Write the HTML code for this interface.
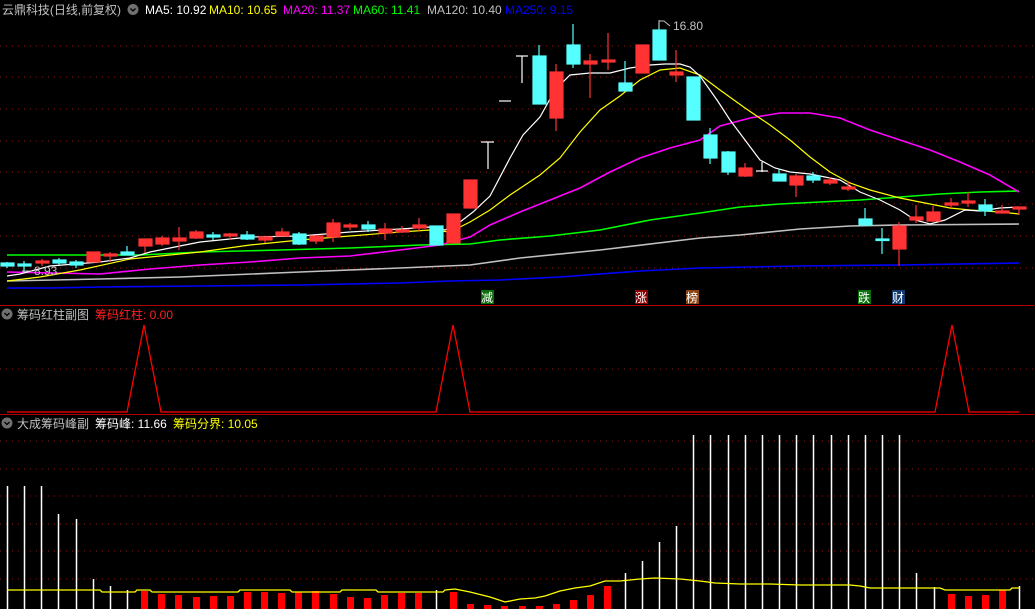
<!DOCTYPE html>
<html><head><meta charset="utf-8"><style>
html,body{margin:0;padding:0;background:#000;width:1035px;height:609px;overflow:hidden}
svg{display:block}
text{font-family:"Liberation Sans","Noto Sans CJK SC",sans-serif;font-size:12px}
</style></head><body>
<svg width="1035" height="609" viewBox="0 0 1035 609" xmlns="http://www.w3.org/2000/svg">
<rect width="1035" height="609" fill="#000"/>
<!-- grid main -->
<g stroke="#8b1a1a" stroke-dasharray="1,5" stroke-width="1">
<line x1="0" y1="46" x2="1035" y2="46"/><line x1="0" y1="77" x2="1035" y2="77"/><line x1="0" y1="109" x2="1035" y2="109"/><line x1="0" y1="141" x2="1035" y2="141"/><line x1="0" y1="172" x2="1035" y2="172"/><line x1="0" y1="204" x2="1035" y2="204"/><line x1="0" y1="236" x2="1035" y2="236"/><line x1="0" y1="268" x2="1035" y2="268"/>
<line x1="0" y1="369" x2="1035" y2="369"/>
<line x1="0" y1="441" x2="1035" y2="441"/><line x1="0" y1="469" x2="1035" y2="469"/><line x1="0" y1="496" x2="1035" y2="496"/><line x1="0" y1="524" x2="1035" y2="524"/><line x1="0" y1="551" x2="1035" y2="551"/><line x1="0" y1="579" x2="1035" y2="579"/>
</g>
<line x1="0" y1="305.5" x2="1035" y2="305.5" stroke="#b00000"/>
<line x1="0" y1="414.5" x2="1035" y2="414.5" stroke="#b00000"/>
<!-- MAs -->
<g fill="none" stroke-width="1.2">
<polyline stroke="#0000ff" stroke-width="1.6" points="7,288 50,288 100,287 200,286 300,285 400,283 450,281 500,280 560,277 640,271 700,268 800,266 900,265 1019,263"/>
<polyline stroke="#c0c0c0" stroke-width="1.6" points="7,281 100,279 180,277 300,272 400,268 470,265 520,258 600,250 700,238 740,235 800,229 850,226 900,225 1019,224"/>
<polyline stroke="#00ff00" stroke-width="1.6" points="7,255 140,255 200,252 280,250 350,248 420,245 470,244 500,240 550,236 600,230 650,220 700,213 740,207 780,204 820,202 860,200 900,197 940,194 980,192 1019,191"/>
<polyline stroke="#ff00ff" stroke-width="1.6" points="7,272 100,274 150,269 200,265 250,262 300,258 350,256 400,250 440,245 470,237 490,225 520,212 550,200 580,188 610,172 640,158 670,148 700,140 720,126 750,118 780,113 810,113 840,118 870,130 900,140 930,150 960,162 990,175 1019,192"/>
<polyline stroke="#ffff00" points="7,281 40,277 80,270 130,259 200,252 250,245 300,240 350,236 400,232 430,230 450,232 470,222 490,210 510,195 525,185 540,175 560,158 580,132 600,110 620,96 640,80 660,70 680,68 700,75 720,90 745,108 770,125 790,140 810,157 830,172 850,183 870,190 900,198 930,204 950,208 970,210 1000,212 1019,214"/>
<polyline stroke="#ffffff" points="7,276 20,274 50,266 100,262 130,258 150,252 200,242 250,237 300,236 350,232 400,229 430,227 445,230 460,222 473,212 490,196 510,158 523,135 540,117 555,90 570,75 590,73 610,73 630,68 650,65 665,64 680,64 690,67 700,76 717,100 730,120 745,140 760,160 775,168 790,172 810,174 840,180 860,192 880,200 900,210 915,220 930,224 945,220 965,210 980,211 1000,208 1019,207"/>
</g>
<!-- candles -->
<g stroke-width="1.2">
<g stroke="#55ffff" fill="#55ffff">
<line x1="7" y1="262" x2="7" y2="268"/><rect x="1" y="263" width="13" height="3"/>
<line x1="24" y1="261" x2="24" y2="272"/><rect x="18" y="264" width="13" height="2"/>
<line x1="59" y1="258" x2="59" y2="265"/><rect x="53" y="260" width="13" height="3"/>
<line x1="76" y1="260" x2="76" y2="268"/><rect x="70" y="262" width="13" height="3"/>
<line x1="127" y1="246" x2="127" y2="255"/><rect x="121" y="252" width="13" height="3"/>
<line x1="213" y1="232" x2="213" y2="240"/><rect x="207" y="235" width="13" height="2"/>
<line x1="247" y1="231" x2="247" y2="240"/><rect x="241" y="235" width="13" height="4"/>
<line x1="299" y1="232" x2="299" y2="245"/><rect x="293" y="234" width="13" height="10"/>
<line x1="368" y1="221" x2="368" y2="232"/><rect x="362" y="225" width="13" height="4"/>
<rect x="430" y="226" width="13" height="19"/>
<line x1="539" y1="45" x2="539" y2="104"/><rect x="533" y="56" width="13" height="48"/>
<line x1="573" y1="24" x2="573" y2="68"/><rect x="567" y="45" width="13" height="19"/>
<line x1="625" y1="61" x2="625" y2="91"/><rect x="619" y="83" width="13" height="8"/>
<line x1="659" y1="22" x2="659" y2="60"/><rect x="653" y="30" width="13" height="30"/>
<rect x="687" y="77" width="13" height="43"/>
<line x1="710" y1="128" x2="710" y2="164"/><rect x="704" y="135" width="13" height="23"/>
<line x1="728" y1="151" x2="728" y2="175"/><rect x="722" y="152" width="13" height="20"/>
<line x1="779" y1="169" x2="779" y2="181"/><rect x="773" y="174" width="13" height="7"/>
<line x1="813" y1="172" x2="813" y2="183"/><rect x="807" y="176" width="13" height="4"/>
<line x1="865" y1="208" x2="865" y2="225"/><rect x="859" y="219" width="13" height="6"/>
<line x1="882" y1="228" x2="882" y2="254"/><rect x="876" y="239" width="13" height="1.5"/>
<line x1="985" y1="199" x2="985" y2="216"/><rect x="979" y="205" width="13" height="6"/>
</g>
<g stroke="#ff3333" fill="#ff3333">
<line x1="42" y1="259" x2="42" y2="266"/><rect x="36" y="261" width="13" height="2"/>
<rect x="87" y="252" width="13" height="10"/>
<line x1="110" y1="252" x2="110" y2="262"/><rect x="104" y="254" width="13" height="2"/>
<line x1="145" y1="239" x2="145" y2="253"/><rect x="139" y="239" width="13" height="7"/>
<line x1="162" y1="236" x2="162" y2="246"/><rect x="156" y="238" width="13" height="6"/>
<line x1="179" y1="227" x2="179" y2="250"/><rect x="173" y="238" width="13" height="3"/>
<line x1="196" y1="230" x2="196" y2="239"/><rect x="190" y="232" width="13" height="6"/>
<line x1="230" y1="233" x2="230" y2="240"/><rect x="224" y="234" width="13" height="2"/>
<line x1="265" y1="237" x2="265" y2="243"/><rect x="259" y="237" width="13" height="3"/>
<line x1="282" y1="228" x2="282" y2="236"/><rect x="276" y="232" width="13" height="4"/>
<line x1="316" y1="235" x2="316" y2="244"/><rect x="310" y="236" width="13" height="5"/>
<line x1="333" y1="219" x2="333" y2="242"/><rect x="327" y="223" width="13" height="14"/>
<line x1="350" y1="223" x2="350" y2="230"/><rect x="344" y="225" width="13" height="2"/>
<line x1="385" y1="223" x2="385" y2="240"/><rect x="379" y="229" width="13" height="4"/>
<line x1="402" y1="226" x2="402" y2="233"/><rect x="396" y="230" width="13" height="2"/>
<line x1="419" y1="218" x2="419" y2="231"/><rect x="413" y="225" width="13" height="3"/>
<rect x="447" y="214" width="13" height="29"/>
<rect x="464" y="180" width="13" height="28"/>
<line x1="556" y1="64" x2="556" y2="131"/><rect x="550" y="72" width="13" height="46"/>
<line x1="590" y1="54" x2="590" y2="98"/><rect x="584" y="61" width="13" height="3"/>
<line x1="608" y1="33" x2="608" y2="70"/><rect x="602" y="60" width="13" height="2"/>
<rect x="636" y="45" width="13" height="28"/>
<line x1="676" y1="50" x2="676" y2="82"/><rect x="670" y="72" width="13" height="3"/>
<line x1="745" y1="163" x2="745" y2="177"/><rect x="739" y="168" width="13" height="8"/>
<line x1="796" y1="174" x2="796" y2="197"/><rect x="790" y="176" width="13" height="9"/>
<line x1="830" y1="177" x2="830" y2="185"/><rect x="824" y="180" width="13" height="3"/>
<line x1="848" y1="181" x2="848" y2="191"/><rect x="842" y="187" width="13" height="2"/>
<line x1="899" y1="222" x2="899" y2="266"/><rect x="893" y="226" width="13" height="23"/>
<line x1="916" y1="205" x2="916" y2="223"/><rect x="910" y="217" width="13" height="3"/>
<line x1="933" y1="206" x2="933" y2="222"/><rect x="927" y="212" width="13" height="9"/>
<line x1="951" y1="198" x2="951" y2="208"/><rect x="945" y="203" width="13" height="2"/>
<line x1="968" y1="192" x2="968" y2="207"/><rect x="962" y="201" width="13" height="2"/>
<line x1="1002" y1="205" x2="1002" y2="213"/><rect x="996" y="211" width="13" height="2"/>
<line x1="1019" y1="207" x2="1019" y2="215"/><rect x="1013" y="207" width="13" height="2"/>
</g>
<g stroke="#ffffff">
<line x1="481" y1="142" x2="494" y2="142"/><line x1="488" y1="142" x2="488" y2="169"/>
<line x1="499" y1="101" x2="511" y2="101"/>
<line x1="516" y1="56" x2="528" y2="56"/><line x1="522" y1="56" x2="522" y2="83"/>
<line x1="756" y1="171" x2="768" y2="171"/><line x1="762" y1="162" x2="762" y2="172"/>
</g>
</g>
<!-- labels main -->
<line x1="22" y1="271" x2="32" y2="271" stroke="#c0c0c0"/>
<text x="34" y="275" fill="#c0c0c0">8.93</text>
<path d="M659 20 V28 M659 21 H664 L670 26" stroke="#c0c0c0" fill="none"/>
<text x="673" y="30" fill="#c0c0c0">16.80</text>
<rect x="481" y="290" width="13" height="14" fill="#0a6e0a"/><text x="481" y="302" fill="#fff">减</text>
<rect x="635" y="290" width="13" height="14" fill="#8b0000"/><text x="635" y="302" fill="#fff">涨</text>
<rect x="686" y="290" width="13" height="14" fill="#8b4513"/><text x="686" y="302" fill="#fff">榜</text>
<rect x="858" y="290" width="13" height="14" fill="#0a6e0a"/><text x="858" y="302" fill="#fff">跌</text>
<rect x="892" y="290" width="13" height="14" fill="#123a6e"/><text x="892" y="302" fill="#fff">财</text>
<!-- header -->
<text x="2" y="14" fill="#c0c0c0" textLength="119">云鼎科技(日线,前复权)</text>
<circle cx="133" cy="9.5" r="5.5" fill="#707070"/><path d="M130.5 8.5 L133 11 L135.5 8.5" stroke="#000" fill="none" stroke-width="1.3"/>
<text x="145" y="14" fill="#ffffff">MA5: 10.92</text>
<text x="209" y="14" fill="#ffff00">MA10: 10.65</text>
<text x="283" y="14" fill="#ff00ff">MA20: 11.37</text>
<text x="353" y="14" fill="#00ff00">MA60: 11.41</text>
<text x="427" y="14" fill="#c0c0c0">MA120: 10.40</text>
<text x="505" y="14" fill="#0000ff">MA250: 9.15</text>
<!-- middle panel -->
<circle cx="7" cy="314" r="5.5" fill="#707070"/><path d="M4.5 313 L7 315.5 L9.5 313" stroke="#000" fill="none" stroke-width="1.3"/>
<text x="17" y="319" fill="#c0c0c0">筹码红柱副图</text>
<text x="95" y="319" fill="#ff2020">筹码红柱: 0.00</text>
<polyline fill="none" stroke="#ff0000" stroke-width="1.3" points="7,412 127,412 144,325 161,412 436,412 453,325 470,412 935,412 952,325 969,412 1019,412"/>
<!-- bottom panel -->
<circle cx="7" cy="423" r="5.5" fill="#707070"/><path d="M4.5 422 L7 424.5 L9.5 422" stroke="#000" fill="none" stroke-width="1.3"/>
<text x="17" y="428" fill="#c0c0c0">大成筹码峰副</text>
<text x="95" y="428" fill="#ffffff">筹码峰: 11.66</text>
<text x="173" y="428" fill="#ffff00">筹码分界: 10.05</text>
<g stroke="#ffffff" stroke-width="1.5">
<line x1="7.5" y1="486" x2="7.5" y2="609"/><line x1="24.5" y1="486" x2="24.5" y2="609"/><line x1="41.5" y1="486" x2="41.5" y2="609"/><line x1="58.5" y1="514" x2="58.5" y2="609"/><line x1="76.5" y1="519" x2="76.5" y2="609"/><line x1="93.5" y1="579" x2="93.5" y2="609"/><line x1="110.5" y1="586" x2="110.5" y2="609"/><line x1="127.5" y1="590" x2="127.5" y2="609"/>
<line x1="436.5" y1="590" x2="436.5" y2="609"/>
<line x1="625.5" y1="573" x2="625.5" y2="609"/><line x1="642.5" y1="561" x2="642.5" y2="609"/><line x1="659.5" y1="542" x2="659.5" y2="609"/><line x1="676.5" y1="526" x2="676.5" y2="609"/>
<line x1="693.5" y1="435" x2="693.5" y2="609"/><line x1="710.5" y1="435" x2="710.5" y2="609"/><line x1="728.5" y1="435" x2="728.5" y2="609"/><line x1="745.5" y1="435" x2="745.5" y2="609"/><line x1="762.5" y1="435" x2="762.5" y2="609"/><line x1="779.5" y1="435" x2="779.5" y2="609"/><line x1="796.5" y1="435" x2="796.5" y2="609"/><line x1="813.5" y1="435" x2="813.5" y2="609"/><line x1="831.5" y1="435" x2="831.5" y2="609"/><line x1="848.5" y1="435" x2="848.5" y2="609"/><line x1="865.5" y1="435" x2="865.5" y2="609"/><line x1="882.5" y1="435" x2="882.5" y2="609"/><line x1="899.5" y1="435" x2="899.5" y2="609"/>
<line x1="916.5" y1="573" x2="916.5" y2="609"/><line x1="934.5" y1="587" x2="934.5" y2="609"/><line x1="1019.5" y1="586" x2="1019.5" y2="609"/>
</g>
<g fill="#ff0000">
<rect x="141" y="591" width="7" height="18"/><rect x="158" y="594" width="7" height="15"/><rect x="175" y="595" width="7" height="14"/><rect x="193" y="597" width="7" height="12"/><rect x="210" y="596" width="7" height="13"/><rect x="227" y="596" width="7" height="13"/><rect x="244" y="592" width="7" height="17"/><rect x="261" y="592" width="7" height="17"/><rect x="278" y="593" width="7" height="16"/><rect x="295" y="592" width="7" height="17"/><rect x="312" y="591" width="7" height="18"/><rect x="330" y="594" width="7" height="15"/><rect x="347" y="597" width="7" height="12"/><rect x="364" y="598" width="7" height="11"/><rect x="381" y="595" width="7" height="14"/><rect x="398" y="593" width="7" height="16"/><rect x="415" y="593" width="7" height="16"/>
<rect x="450" y="592" width="7" height="17"/><rect x="467" y="604" width="7" height="5"/><rect x="484" y="605" width="7" height="4"/><rect x="501" y="606" width="7" height="3"/><rect x="519" y="606" width="7" height="3"/><rect x="536" y="606" width="7" height="3"/><rect x="553" y="604" width="7" height="5"/><rect x="570" y="600" width="7" height="9"/><rect x="587" y="595" width="7" height="14"/><rect x="604" y="586" width="7" height="23"/>
<rect x="948" y="594" width="7" height="15"/><rect x="965" y="596" width="7" height="13"/><rect x="982" y="595" width="7" height="14"/><rect x="999" y="590" width="7" height="19"/>
</g>
<polyline fill="none" stroke="#ffff00" stroke-width="1.3" points="7,590 100,590 102,592 135,592 137,590 150,590 152,592 238,592 240,590 290,590 292,592 340,592 342,590 376,590 378,592 443,592 445,590 455,589 470,592 490,597 505,602 520,599 535,598 545,596 560,591 575,588 590,586 605,581 620,581 640,579 655,578 680,579 700,581 715,583 740,584 770,584 800,585 850,585 860,586 870,588 940,588 945,590 1010,590 1012,588 1020,588"/>
</svg>
</body></html>
